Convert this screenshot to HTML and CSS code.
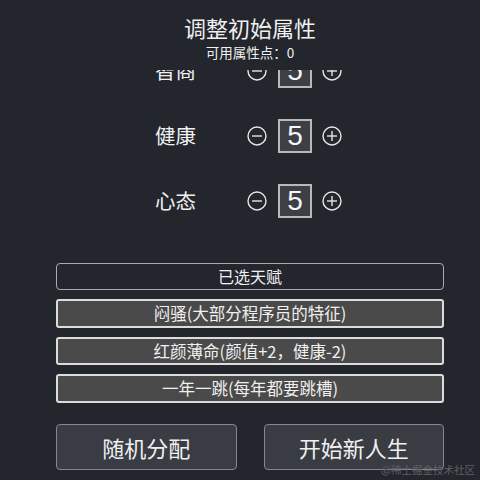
FILE: index.html
```html
<!DOCTYPE html>
<html lang="zh">
<head>
<meta charset="utf-8">
<title>调整初始属性</title>
<link rel="stylesheet" href="styles.css">
</head>
<body>
<div class="page">
  <header class="head">
    <h1 class="title">调整初始属性</h1>
    <div class="points">可用属性点：0</div>
  </header>

  <div class="scroller">
    <ul class="attrs">
      <li class="attr">
        <span class="label">智商</span>
        <button class="step"><svg viewBox="0 0 20 20"><circle cx="10" cy="10" r="9" /><line x1="5" y1="10" x2="15" y2="10"/></svg></button>
        <span class="val">5</span>
        <button class="step"><svg viewBox="0 0 20 20"><circle cx="10" cy="10" r="9" /><line x1="5" y1="10" x2="15" y2="10"/><line x1="10" y1="5" x2="10" y2="15"/></svg></button>
      </li>
      <li class="attr">
        <span class="label">健康</span>
        <button class="step"><svg viewBox="0 0 20 20"><circle cx="10" cy="10" r="9" /><line x1="5" y1="10" x2="15" y2="10"/></svg></button>
        <span class="val">5</span>
        <button class="step"><svg viewBox="0 0 20 20"><circle cx="10" cy="10" r="9" /><line x1="5" y1="10" x2="15" y2="10"/><line x1="10" y1="5" x2="10" y2="15"/></svg></button>
      </li>
      <li class="attr">
        <span class="label">心态</span>
        <button class="step"><svg viewBox="0 0 20 20"><circle cx="10" cy="10" r="9" /><line x1="5" y1="10" x2="15" y2="10"/></svg></button>
        <span class="val">5</span>
        <button class="step"><svg viewBox="0 0 20 20"><circle cx="10" cy="10" r="9" /><line x1="5" y1="10" x2="15" y2="10"/><line x1="10" y1="5" x2="10" y2="15"/></svg></button>
      </li>
    </ul>
  </div>

  <section class="talents">
    <div class="talent-head">已选天赋</div>
    <div class="talent">闷骚(大部分程序员的特征)</div>
    <div class="talent">红颜薄命(颜值+2，健康-2)</div>
    <div class="talent">一年一跳(每年都要跳槽)</div>
  </section>

  <footer class="actions">
    <button class="btn">随机分配</button>
    <button class="btn">开始新人生</button>
  </footer>

  <div class="watermark">@稀土掘金技术社区</div>
</div>
</body>
</html>
```

FILE: styles.css
```css
* { box-sizing: border-box; }

html, body {
  margin: 0;
  padding: 0;
  background: #23262d;
}

body {
  font-family: "Noto Sans CJK SC", "Noto Sans", sans-serif;
  color: #f0f0f0;
}

.page {
  position: relative;
  width: 480px;
  height: 480px;
  overflow: hidden;
}

.head {
  height: 70px;
  padding: 14px 0 0 20px;
  text-align: center;
}

.title {
  margin: 0;
  font-size: 22px;
  font-weight: 400;
  line-height: 26px;
}

.points {
  font-size: 13.5px;
  line-height: 18px;
  margin-top: 3px;
}

.scroller {
  height: 183px;
  overflow: hidden;
}

.attrs {
  list-style: none;
  margin: -32px 0 0 0;
  padding: 0;
}

.attr {
  height: 65px;
  display: flex;
  align-items: center;
  padding-left: 155px;
}

.label {
  width: 92px;
  font-size: 20.5px;
  line-height: 1;
}

.step {
  width: 20px;
  height: 20px;
  padding: 0;
  border: 0;
  background: none;
  display: flex;
}

.step svg {
  width: 20px;
  height: 20px;
  fill: none;
  stroke: #e6e6e6;
  stroke-width: 1.4;
}

.val {
  width: 34px;
  height: 34px;
  margin: 0 10px 0 11px;
  border: 2px solid #b9b9b9;
  background: #3c3f45;
  font-family: "Liberation Sans", "Noto Sans", sans-serif;
  font-size: 28px;
  line-height: 30px;
  text-align: center;
  color: #f6f6f6;
}

.talents {
  margin: 10px 36px 0 56px;
  display: flex;
  flex-direction: column;
  gap: 9px;
}

.talent-head {
  height: 27px;
  border: 1px solid #a9aaad;
  border-radius: 4px;
  font-size: 16px;
  line-height: 25px;
  text-align: center;
}

.talent {
  height: 28.5px;
  border: 2px solid #dcdcdc;
  border-radius: 3px;
  background: #4a4a4a;
  font-size: 16.5px;
  line-height: 24px;
  text-align: center;
}

.actions {
  margin: 21px 36px 0 56px;
  display: flex;
  gap: 27px;
}

.btn {
  flex: 1;
  height: 46px;
  border: 1px solid #85878b;
  border-radius: 4px;
  background: #393c43;
  color: #f0f0f0;
  font-family: "Noto Sans CJK SC", "Noto Sans", sans-serif;
  font-size: 22px;
  padding: 0;
}

.watermark {
  position: absolute;
  right: 5px;
  bottom: 3px;
  font-family: "Noto Sans CJK SC", serif;
  font-size: 10.5px;
  color: #5e6066;
}
```
